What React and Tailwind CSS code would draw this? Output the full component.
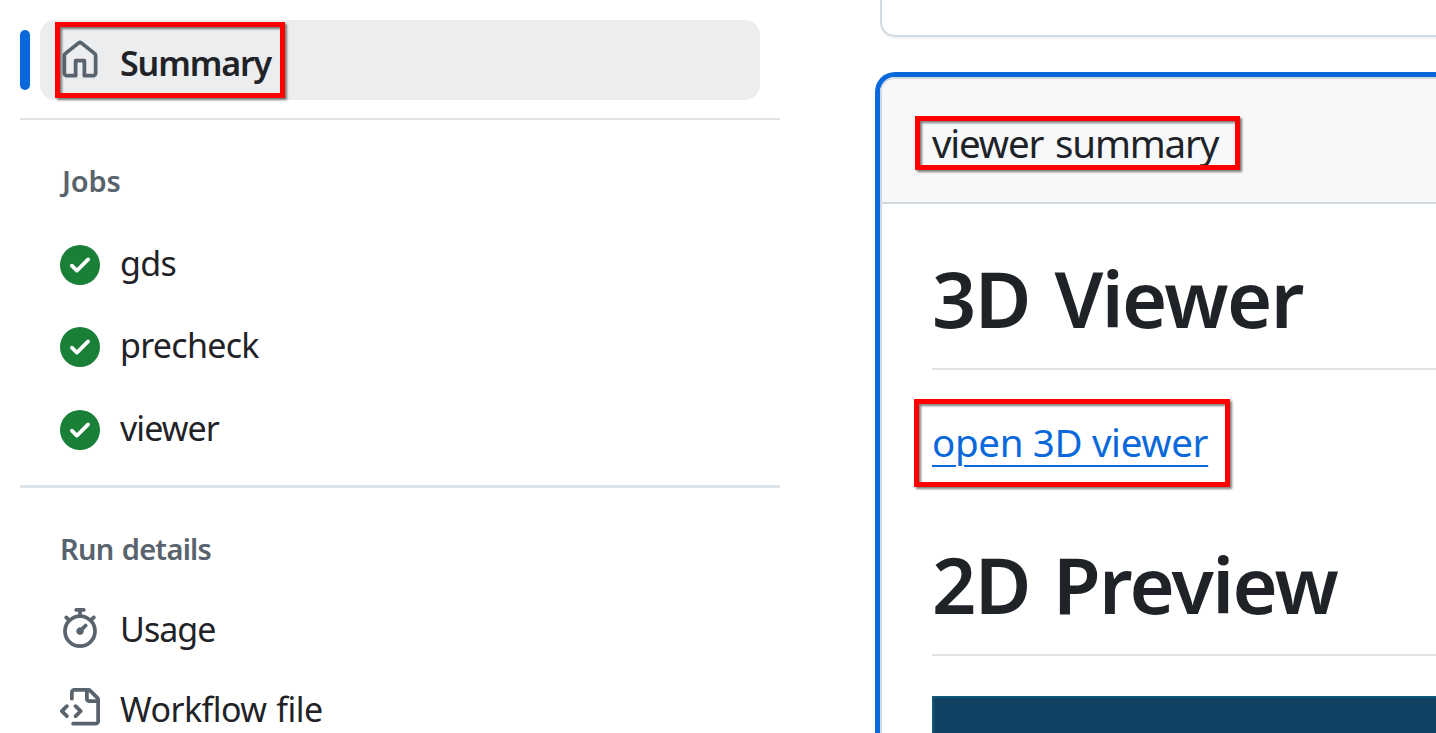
const ICONS = {
  home: "M6.906.664a1.749 1.749 0 0 1 2.187 0l5.25 4.2c.415.332.657.835.657 1.367v7.019A1.75 1.75 0 0 1 13.25 15h-3.5a.75.75 0 0 1-.75-.75V9H7v5.25a.75.75 0 0 1-.75.75h-3.5A1.75 1.75 0 0 1 1 13.25V6.23c0-.531.242-1.034.657-1.366l5.25-4.2Zm1.25 1.171a.25.25 0 0 0-.312 0l-5.25 4.2a.25.25 0 0 0-.094.196v7.019c0 .138.112.25.25.25H5.5V8.25a.75.75 0 0 1 .75-.75h3.5a.75.75 0 0 1 .75.75v5.25h2.75a.25.25 0 0 0 .25-.25V6.23a.25.25 0 0 0-.094-.195Z",
  check: "M8 16A8 8 0 1 1 8 0a8 8 0 0 1 0 16Zm3.78-9.72a.751.751 0 0 0-.018-1.042.751.751 0 0 0-1.042-.018L6.75 9.19 5.28 7.72a.751.751 0 0 0-1.042.018.751.751 0 0 0-.018 1.042l2 2a.75.75 0 0 0 1.06 0Z",
  stopwatch: "M5.75.75A.75.75 0 0 1 6.5 0h3a.75.75 0 0 1 0 1.5h-.75v1l-.001.041a6.724 6.724 0 0 1 3.464 1.435l.007-.006.75-.75a.749.749 0 0 1 1.275.326.749.749 0 0 1-.215.734l-.75.75-.006.007a6.75 6.75 0 1 1-10.548 0L2.72 5.03l-.75-.75a.751.751 0 0 1 .018-1.042.751.751 0 0 1 1.042-.018l.75.75.007.006A6.72 6.72 0 0 1 7.25 2.541V1.5H6.5a.75.75 0 0 1-.75-.75ZM8 14.5a5.25 5.25 0 1 0-.001-10.501A5.25 5.25 0 0 0 8 14.5Zm.389-6.7 1.33-1.33a.75.75 0 1 1 1.061 1.06L9.45 8.861A1.503 1.503 0 0 1 8 10.75a1.499 1.499 0 1 1 .389-2.95Z",
  fileCode: "M4 1.75C4 .784 4.784 0 5.75 0h5.586c.464 0 .909.184 1.237.513l2.914 2.914c.329.328.513.773.513 1.237v8.586A1.75 1.75 0 0 1 14.25 15h-9a.75.75 0 0 1 0-1.5h9a.25.25 0 0 0 .25-.25V6h-2.75A1.75 1.75 0 0 1 10 4.25V1.5H5.75a.25.25 0 0 0-.25.25v2.5a.75.75 0 0 1-1.5 0Zm1.72 4.97a.75.75 0 0 1 1.06 0l2 2a.75.75 0 0 1 0 1.06l-2 2a.749.749 0 0 1-1.275-.326.749.749 0 0 1 .215-.734l1.47-1.47-1.47-1.47a.75.75 0 0 1 0-1.06ZM3.28 7.78 1.81 9.25l1.47 1.47a.751.751 0 0 1-.018 1.042.751.751 0 0 1-1.042.018l-2-2a.75.75 0 0 1 0-1.06l2-2a.751.751 0 0 1 1.042.018.751.751 0 0 1 .018 1.042Zm8.22-6.218V4.25c0 .138.112.25.25.25h2.688l-.011-.013-2.914-2.914-.013-.011Z",
};

function Icon({ name, className }) {
  return (
    <svg viewBox="0 0 16 16" fill="currentColor" aria-hidden="true" className={`size-10 shrink-0 ${className}`}>
      <path d={ICONS[name]} />
    </svg>
  );
}

function Highlight({ className }) {
  return (
    <span
      className={`pointer-events-none absolute border-[5px] border-[#ff0000] drop-shadow-[2px_2px_1px_rgba(0,0,0,0.5)] ${className}`}
    />
  );
}

function NavItem({ icon, label, iconClass = "text-[#59636e]", rowClass = "h-20", labelClass }) {
  return (
    <li className={`flex items-center gap-5 pl-10 ${rowClass}`}>
      <Icon name={icon} className={iconClass} />
      <span className={`whitespace-nowrap text-[34px] leading-10 ${labelClass}`}>{label}</span>
    </li>
  );
}

function Sidebar() {
  return (
    <nav className="flex w-[780px] shrink-0 flex-col pl-5 pt-5">
      <div className="flex items-center gap-2.5">
        <span className="h-[60px] w-2.5 rounded-full bg-[#0969da]" />
        <div className="relative flex h-20 w-[720px] items-center gap-5 rounded-[15px] bg-[#ecedef] pl-5">
          <Icon name="home" className="text-[#59636e]" />
          <span className="pt-1.5 text-[34px] font-semibold leading-10 tracking-[-1.13px]">Summary</span>
          <Highlight className="left-[15px] top-0.5 h-[76px] w-[230px]" />
        </div>
      </div>

      <hr className="mt-[18px] h-0.5 shrink-0 border-0 bg-[#dfe4e9]" />

      <h3 className="mt-10 h-10 pl-[42px] pt-px text-[29px] font-semibold leading-10 tracking-[-0.14px] text-[#59636e]">
        Jobs
      </h3>
      <ul className="mt-6">
        <NavItem icon="check" label="gds" iconClass="text-[#1a7f37]" rowClass="h-[82px]" labelClass="pb-[5px] tracking-[-0.6px]" />
        <NavItem icon="check" label="precheck" iconClass="text-[#1a7f37]" rowClass="h-[82px]" labelClass="pb-[5px] tracking-[-0.71px]" />
        <NavItem icon="check" label="viewer" iconClass="text-[#1a7f37]" rowClass="h-[84px]" labelClass="pb-[5px] tracking-[-0.95px]" />
      </ul>

      <hr className="mt-[13px] h-[3px] shrink-0 border-0 bg-[#dfe4e9]" />

      <h3 className="mt-10 h-10 pl-10 pt-px text-[29px] font-semibold leading-10 tracking-[-0.74px] text-[#59636e] [word-spacing:1.5px]">
        Run details
      </h3>
      <ul className="mt-5">
        <NavItem icon="stopwatch" label="Usage" labelClass="pt-0.5 tracking-[-0.95px]" />
        <NavItem icon="fileCode" label="Workflow file" labelClass="pt-0.5 tracking-[-0.54px] [word-spacing:1.5px]" />
      </ul>
    </nav>
  );
}

function SummaryCard() {
  return (
    <section className="mt-10 h-[700px] shrink-0 overflow-hidden rounded-l-[15px] border-2 border-r-0 border-[#d1d9e0] shadow-[0_0_0_5px_#0969da]">
      <header className="flex h-[125px] items-center border-b-2 border-[#d1d9e0] bg-[#f6f8fa] pl-[50px]">
        <div className="relative">
          <p className="whitespace-nowrap pt-[5px] text-[38.5px] leading-[60px] tracking-[-1.2px] [word-spacing:3.2px]">
            viewer summary
          </p>
          <Highlight className="-left-[17px] top-2 h-[54px] w-[325px]" />
        </div>
      </header>
      <div className="pl-[50px] pt-11">
        <h1 className="border-b-2 border-[#dfe4e9] pb-5 text-[77.5px] font-semibold leading-[100px] tracking-[-1.6px] [word-spacing:6px]">
          3D Viewer
        </h1>
        <div className="relative mt-[42px] h-[60px]">
          <a
            href="#viewer"
            className="whitespace-nowrap text-[38.5px] leading-[60px] tracking-[-0.34px] text-[#0969da] underline decoration-2 underline-offset-8"
          >
            open 3D viewer
          </a>
          <Highlight className="-left-[18px] -top-[13px] h-[88px] w-[316px]" />
        </div>
        <h1 className="mt-[62px] border-b-2 border-[#dfe4e9] pb-5 text-[77.5px] font-semibold leading-[100px] tracking-[-1.7px] [word-spacing:5px]">
          2D Preview
        </h1>
        <div className="mt-10 h-20 border-l-2 border-t-2 border-[#11587a] bg-[#124263]" />
      </div>
    </section>
  );
}

export default function App() {
  return (
    <div className="flex h-[733px] w-[1436px] overflow-hidden bg-white font-['Noto_Sans','Open_Sans',sans-serif] text-[#1f2328]">
      <Sidebar />
      <main className="ml-[100px] flex min-w-0 flex-1 flex-col">
        <section className="h-[37px] shrink-0 rounded-bl-[15px] border-b-2 border-l-2 border-[#d1d9e0] shadow-[0_2px_0_#f4f5f6]" />
        <SummaryCard />
      </main>
    </div>
  );
}
